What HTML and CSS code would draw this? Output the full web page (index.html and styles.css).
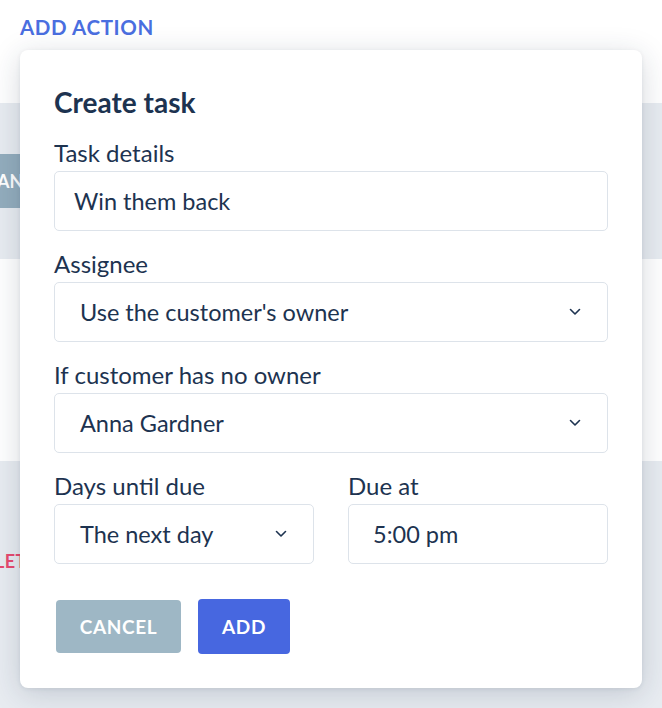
FILE: index.html
```html
<!DOCTYPE html>
<html>
<head>
<meta charset="utf-8">
<link rel="stylesheet" href="styles.css">
</head>
<body>
<div class="page">
  <div class="top">
    <a class="add-action">ADD ACTION</a>
  </div>
  <div class="band band-gray band-1">
    <span class="ghost-btn">AN</span>
  </div>
  <div class="band band-white band-2"></div>
  <div class="band band-gray band-3">
    <span class="ghost-del">LETE</span>
  </div>

  <div class="popover">
    <h2 class="title">Create task</h2>
    <div class="field">
      <label class="label">Task details</label>
      <div class="input">Win them back</div>
    </div>
    <div class="field">
      <label class="label">Assignee</label>
      <div class="input select">
        <span>Use the customer's owner</span>
        <svg class="chev" width="12" height="8" viewBox="0 0 12 8"><path d="M1.5 1.5 L6 6 L10.5 1.5" fill="none" stroke="#1d3350" stroke-width="1.6" stroke-linecap="round" stroke-linejoin="round"/></svg>
      </div>
    </div>
    <div class="field">
      <label class="label">If customer has no owner</label>
      <div class="input select">
        <span>Anna Gardner</span>
        <svg class="chev" width="12" height="8" viewBox="0 0 12 8"><path d="M1.5 1.5 L6 6 L10.5 1.5" fill="none" stroke="#1d3350" stroke-width="1.6" stroke-linecap="round" stroke-linejoin="round"/></svg>
      </div>
    </div>
    <div class="row">
      <div class="field col">
        <label class="label">Days until due</label>
        <div class="input select">
          <span>The next day</span>
          <svg class="chev" width="12" height="8" viewBox="0 0 12 8"><path d="M1.5 1.5 L6 6 L10.5 1.5" fill="none" stroke="#1d3350" stroke-width="1.6" stroke-linecap="round" stroke-linejoin="round"/></svg>
        </div>
      </div>
      <div class="field col">
        <label class="label">Due at</label>
        <div class="input time">5:00 pm</div>
      </div>
    </div>
    <div class="actions">
      <button class="btn btn-cancel">CANCEL</button>
      <button class="btn btn-add">ADD</button>
    </div>
  </div>
</div>
</body>
</html>
```
FILE: styles.css
```css
html, body {
  margin: 0;
  padding: 0;
}
body {
  background: #ffffff;
  font-family: Lato, "Open Sans", "Noto Sans", sans-serif;
  color: #1d3350;
}
.page {
  position: relative;
  width: 662px;
  height: 708px;
  overflow: hidden;
}
.top {
  height: 103px;
  padding-left: 20px;
  box-sizing: border-box;
}
.add-action {
  display: inline-block;
  margin-top: 15px;
  font-size: 20.5px;
  font-weight: 700;
  letter-spacing: 0.6px;
  color: #4a6ee0;
}
.band {
  width: 100%;
}
.band-gray {
  background: #e8ecf1;
}
.band-1 {
  height: 156px;
  display: flex;
  align-items: flex-start;
}
.band-2 {
  height: 202px;
}
.band-3 {
  height: 247px;
}
.ghost-btn {
  margin-top: 51px;
  height: 54px;
  width: 60px;
  background: #93adbd;
  color: #ffffff;
  font-weight: 700;
  font-size: 18px;
  line-height: 54px;
  text-indent: -3px;
  letter-spacing: 0;
  overflow: hidden;
  white-space: nowrap;
}
.ghost-del {
  display: inline-block;
  margin-top: 89px;
  margin-left: -5px;
  color: #e84a6f;
  font-weight: 700;
  font-size: 18px;
  letter-spacing: 0.4px;
}
.popover {
  position: absolute;
  left: 20px;
  top: 50px;
  width: 622px;
  height: 638px;
  box-sizing: border-box;
  background: #ffffff;
  border-radius: 8px;
  box-shadow: 0 6px 30px rgba(30, 45, 70, 0.18), 0 1px 4px rgba(30, 45, 70, 0.08);
  padding: 33px 34px 0 34px;
}
.title {
  margin: 0 0 17px 0;
  font-size: 28px;
  font-weight: 700;
  line-height: 38px;
  color: #1d3350;
}
.field {
  display: flex;
  flex-direction: column;
  margin-bottom: 18px;
}
.label {
  font-size: 24px;
  line-height: 30px;
  margin-bottom: 3px;
  color: #1d3350;
}
.input {
  height: 60px;
  box-sizing: border-box;
  border: 1px solid #dde3ea;
  border-radius: 5px;
  font-size: 23.5px;
  padding-left: 19px;
  display: flex;
  align-items: center;
  color: #1d3350;
}
.select {
  padding-left: 25px;
  padding-right: 26px;
  justify-content: space-between;
}
.time {
  padding-left: 24px;
}
.row {
  display: flex;
  gap: 34px;
}
.col {
  flex: 1;
}
.col:first-child {
  flex: 0 0 260px;
}
.actions {
  display: flex;
  align-items: center;
  gap: 17px;
  margin-top: 17px;
  padding-left: 2px;
}
.btn {
  border: none;
  border-radius: 4px;
  color: #ffffff;
  font-family: Lato, "Open Sans", sans-serif;
  font-weight: 700;
  font-size: 19px;
  letter-spacing: 0.6px;
  cursor: pointer;
}
.btn-cancel {
  width: 125px;
  height: 53px;
  background: #9eb7c5;
}
.btn-add {
  width: 92px;
  height: 55px;
  background: #4767e0;
}
```
